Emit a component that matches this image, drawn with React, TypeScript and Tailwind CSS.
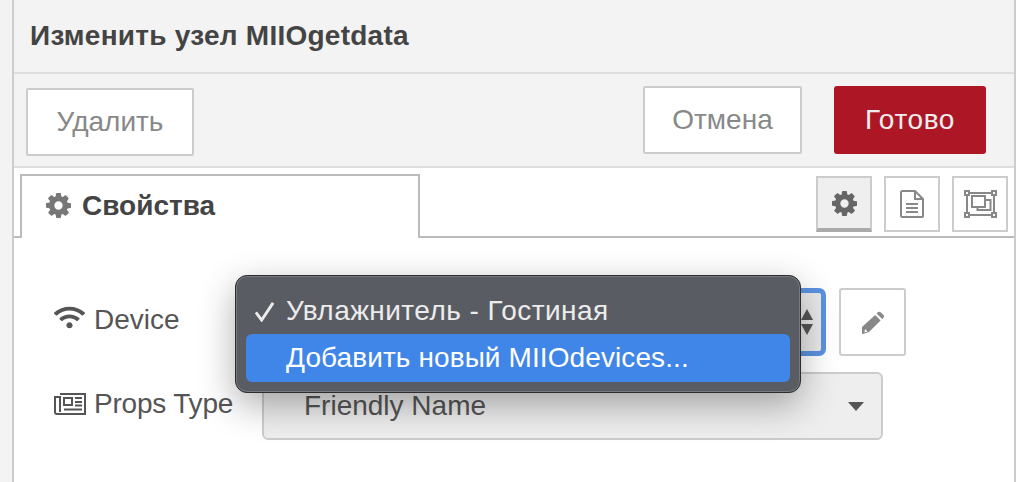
import { FaWifi } from "react-icons/fa";

const COG =
  "M1152 896q0-106-75-181t-181-75-181 75-75 181 75 181 181 75 181-75 75-181zm512-109v222q0 12-8 23t-20 13l-185 28q-19 54-39 91 35 50 107 138 10 12 10 25t-9 23q-27 37-99 108t-94 71q-12 0-26-9l-138-108q-44 23-91 38-16 136-29 186-7 28-36 28h-222q-14 0-24.500-8.500t-11.500-21.500l-28-184q-49-16-90-37l-141 107q-10 9-25 9-14 0-25-11-126-114-165-168-7-10-7-23 0-12 8-23 15-21 51-66.500t54-70.500q-27-50-41-99l-183-27q-13-2-21-12.500t-8-23.500v-222q0-12 8-23t19-13l186-28q14-46 39-92-40-57-107-138-10-12-10-24 0-10 9-23 26-36 98.500-107.500t94.500-71.500q13 0 26 10l138 107q44-23 91-38 16-136 29-186 7-28 36-28h222q14 0 24.500 8.500t11.500 21.500l28 184q49 16 90 37l142-107q9-9 24-9 13 0 25 10 129 119 165 170 7 8 7 22 0 12-8 23-15 21-51 66.500t-54 70.500q26 50 41 98l183 28q13 2 21 12.500t8 23.500z";

function Cog({ className }: { className: string }) {
  return (
    <svg viewBox="128 128 1536 1536" className={className} fill="currentColor">
      <path d={COG} />
    </svg>
  );
}

function FileIcon() {
  return (
    <svg viewBox="0 0 24 28" className="w-[24px] h-[28px] text-[#888]" fill="none" stroke="currentColor" strokeWidth="2">
      <path d="M1 2.500Q1 1 2.500 1H15l8 8v17.500Q23 27 21.500 27h-19Q1 27 1 25.500z" />
      <path d="M15 1v8h8" />
      <path d="M6 14h12M6 18h12M6 22h12" />
    </svg>
  );
}

function SelectionIcon() {
  return (
    <svg viewBox="0 0 33 28" className="w-[33px] h-[28px] text-[#888]" fill="none" stroke="currentColor" strokeWidth="2">
      <path d="M3 3h27M3 25h27M3 3v22M30 3v22" />
      <rect x="1" y="1" width="4" height="4" fill="white" />
      <rect x="28" y="1" width="4" height="4" fill="white" />
      <rect x="1" y="23" width="4" height="4" fill="white" />
      <rect x="28" y="23" width="4" height="4" fill="white" />
      <rect x="8" y="6" width="13" height="11" />
      <path d="M21 10h5.500v10H13.500v-3" />
    </svg>
  );
}

function NewsIcon() {
  return (
    <svg viewBox="0 0 32 22" className="w-[32px] h-[22px]" fill="none" stroke="currentColor" strokeWidth="2">
      <path d="M6 1h25v20H3q-2 0-2-2V4h5v15" />
      <rect x="10" y="5" width="8" height="7" />
      <path d="M21 5h7M21 9h7M21 12.500h7M10 16.500h18" />
    </svg>
  );
}

function PencilIcon() {
  return (
    <svg viewBox="0 0 22 23" className="w-[22px] h-[23px] text-[#888]" fill="currentColor">
      <path d="M14.500 2.500Q16 1 17 0.800q1-.2 2.500 1.200l1.500 1.500q1.300 1.400 1 2.300-.3 1-1.700 2.300z" />
      <path d="M13.200 4l5.400 5.400L7 21 1 23l-1-.5V16z" />
      <path d="M3 18l2.500 2.500-3 1z" fill="white" />
    </svg>
  );
}

function TabButton({ active, children }: { active?: boolean; children: React.ReactNode }) {
  return (
    <div
      className={`w-[56px] h-[56px] flex items-center justify-center border-2 border-[#ccc] ${
        active ? "bg-[#efefef] border-b-[4px] border-b-[#aaa]" : "bg-white"
      }`}
    >
      {children}
    </div>
  );
}

export default function App() {
  return (
    <div className="w-[1020px] h-[482px] overflow-hidden flex bg-white text-[#555] font-['Liberation_Sans',Arial,sans-serif]">
      <div className="w-[14px] shrink-0 bg-[#f3f3f3] border-r-2 border-[#ccc]" />
      <div className="w-[1002px] shrink-0 flex flex-col border-r-2 border-[#ccc] relative">
        <div className="h-[74px] shrink-0 bg-[#f3f3f3] border-b-2 border-[#ddd] flex items-center pl-[16px]">
          <h1 className="text-[28px] font-bold text-[#444] tracking-[0.25px]">Изменить узел MIIOgetdata</h1>
        </div>
        <div className="h-[94px] shrink-0 bg-[#f3f3f3] border-b-2 border-[#ddd] flex items-center justify-between pl-[12px] pr-[28px]">
          <button className="w-[168px] h-[68px] mt-[4px] bg-white border-2 border-[#ccc] rounded-[2px] text-[28px] text-[#888]">Удалить</button>
          <div className="flex gap-[32px] -mt-[1px]">
            <button className="w-[159px] h-[68px] bg-white border-2 border-[#ccc] rounded-[2px] text-[28px] text-[#888]">Отмена</button>
            <button className="w-[152px] h-[68px] bg-[#ad1625] rounded-[3px] text-[28px] text-[#eee] tracking-[0.6px]">Готово</button>
          </div>
        </div>
        <div className="h-[70px] shrink-0 border-b-2 border-[#bbb] flex items-end justify-between pl-[6px] pr-[6px]">
          <div className="w-[400px] h-[64px] -mb-[2px] bg-white border-2 border-b-0 border-[#bbb] flex items-center gap-[11px] pl-[24px] pb-[3px]">
            <Cog className="w-[25px] h-[25px] text-[#777]" />
            <span className="text-[28px] font-bold text-[#444]">Свойства</span>
          </div>
          <div className="flex gap-[12px] mb-[4px]">
            <TabButton active>
              <Cog className="w-[25px] h-[25px] text-[#666]" />
            </TabButton>
            <TabButton>
              <FileIcon />
            </TabButton>
            <TabButton>
              <SelectionIcon />
            </TabButton>
          </div>
        </div>
        <div className="flex-1 flex flex-col gap-[16px] pt-[50px] pl-[40px]">
          <div className="flex items-center">
            <div className="w-[208px] flex items-center gap-[9px] text-[28px] text-[#555] -mt-[5px]">
              <FaWifi className="w-[31px] h-[27px] -mt-[5px]" />
              <span>Device</span>
            </div>
            <div className="w-[564px] h-[68px] bg-[#e9e9e9] border-[5px] border-[#5b93e0] rounded-[7px] flex items-center justify-end pr-[8px]">
              <svg viewBox="0 0 12 26" className="w-[12px] h-[26px] text-[#555]" fill="currentColor">
                <path d="M6 0l6 11H0zM6 26l6-11H0z" />
              </svg>
            </div>
            <button className="ml-[13px] w-[67px] h-[68px] bg-white border-2 border-[#ccc] rounded-[3px] flex items-center justify-center">
              <PencilIcon />
            </button>
          </div>
          <div className="flex items-center">
            <div className="w-[208px] flex items-center gap-[8px] text-[28px] text-[#555] -mt-[4px]">
              <NewsIcon />
              <span className="tracking-[-0.2px]">Props Type</span>
            </div>
            <div className="w-[621px] h-[68px] bg-[#eee] border-2 border-[#ccc] rounded-[6px] flex items-center justify-between pl-[40px] pr-[17px]">
              <span className="text-[28px] text-[#555] -mt-[1px]">Friendly Name</span>
              <span className="w-0 h-0 border-x-[8px] border-x-transparent border-t-[9px] border-t-[#555]" />
            </div>
          </div>
        </div>
        <div className="absolute left-[221px] top-[275px] w-[566px] h-[118px] rounded-[12px] bg-[#5a5c63] border border-[#2c2c2e] shadow-[inset_0_0_0_1px_#77797f,0_12px_36px_rgba(0,0,0,0.32)] px-[10px] pt-[12px]">
          <div className="h-[46px] flex items-center text-[28px] text-[#ececec] relative pl-[40px] tracking-[0.45px]">
            <span className="absolute left-[8px]">
              <svg viewBox="0 0 22 22" className="w-[21px] h-[21px]" fill="none" stroke="#ececec" strokeWidth="3">
                <path d="M2 12l6 8L20 2" />
              </svg>
            </span>
            Увлажнитель - Гостиная
          </div>
          <div className="h-[48px] rounded-[6px] bg-[#3f86e8] flex items-center text-[28px] text-white pl-[40px] tracking-[0.1px]">Добавить новый MIIOdevices...</div>
        </div>
      </div>
    </div>
  );
}
